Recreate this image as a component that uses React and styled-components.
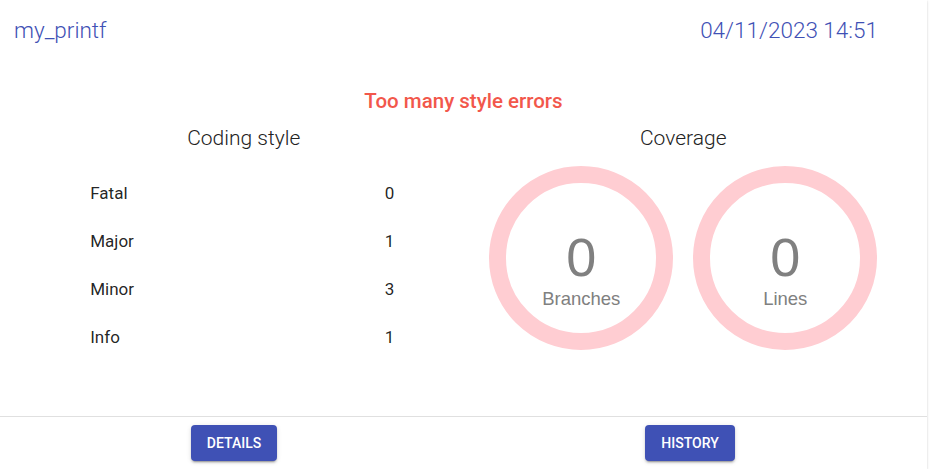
import React from 'react'
import styled, { createGlobalStyle } from 'styled-components'

const GlobalStyle = createGlobalStyle`
  body {
    margin: 0;
    background: #fff;
    font-family: Roboto, 'Noto Sans', sans-serif;
  }
`

const styleRows = [
  { label: 'Fatal', value: 0 },
  { label: 'Major', value: 1 },
  { label: 'Minor', value: 3 },
  { label: 'Info', value: 1 },
]

const coverage = [
  { label: 'Branches', value: 0 },
  { label: 'Lines', value: 0 },
]

const Ring = ({ value, label }) => (
  <RingBox>
    <svg width='184' height='184' viewBox='0 0 184 184'>
      <circle cx='92' cy='92' r='83.5' fill='none' stroke='#ffcdd2' strokeWidth='17' />
    </svg>
    <RingText>
      <span className='num'>{value}</span>
      <span className='lbl'>{label}</span>
    </RingText>
  </RingBox>
)

const App = () => {
  return (
    <>
      <GlobalStyle />
      <Card>
        <Header>
          <Title>my_printf</Title>
          <Stamp>04/11/2023 14:51</Stamp>
        </Header>
        <Content>
          <ErrorText>Too many style errors</ErrorText>
          <Columns>
            <Column>
              <Heading>Coding style</Heading>
              <Table>
                <tbody>
                  {styleRows.map((r) => (
                    <tr key={r.label}>
                      <td>{r.label}</td>
                      <td className='val'>{r.value}</td>
                    </tr>
                  ))}
                </tbody>
              </Table>
            </Column>
            <Column>
              <Heading>Coverage</Heading>
              <Rings>
                {coverage.map((c) => (
                  <Ring key={c.label} value={c.value} label={c.label} />
                ))}
              </Rings>
            </Column>
          </Columns>
        </Content>
        <Footer>
          <FooterCell>
            <Button>Details</Button>
          </FooterCell>
          <FooterCell>
            <Button>History</Button>
          </FooterCell>
        </Footer>
      </Card>
    </>
  )
}

const Card = styled.div`
  width: 927px;
  height: 469px;
  background: #fff;
  display: flex;
  flex-direction: column;
  box-shadow: 0 2px 1px -1px rgba(0, 0, 0, 0.2), 0 1px 1px 0 rgba(0, 0, 0, 0.14),
    0 1px 3px 0 rgba(0, 0, 0, 0.12);
`
const Header = styled.div`
  display: flex;
  justify-content: space-between;
  align-items: center;
  padding: 16px 49px 16px 14px;
  line-height: 29px;
  color: #3f51b5;
  font-size: 22.5px;
  font-weight: 300;
`
const Title = styled.div``
const Stamp = styled.div``
const Content = styled.div`
  flex: 1;
  padding: 27px 24px 0;
`
const ErrorText = styled.div`
  text-align: center;
  color: #f2574b;
  font-size: 20.5px;
  font-weight: 500;
  line-height: 27px;
`
const Columns = styled.div`
  display: grid;
  grid-template-columns: 1fr 1fr;
  margin-top: 7px;
`
const Column = styled.div`
  display: flex;
  flex-direction: column;
  align-items: center;
`
const Heading = styled.div`
  font-size: 21px;
  font-weight: 300;
  line-height: 32px;
  color: #222;
`
const Table = styled.table`
  width: 336px;
  border-collapse: collapse;
  margin: 15px 3px 0 0;
  td {
    height: 48px;
    padding: 0 16px;
    font-size: 17px;
    color: rgba(0, 0, 0, 0.87);
  }
  .val {
    text-align: right;
  }
`
const Rings = styled.div`
  display: flex;
  gap: 20px;
  margin-top: 12px;
`
const RingBox = styled.div`
  position: relative;
  width: 184px;
  height: 184px;
  svg {
    display: block;
  }
`
const RingText = styled.div`
  position: absolute;
  inset: 0;
  display: flex;
  flex-direction: column;
  align-items: center;
  justify-content: center;
  padding-top: 23px;
  font-family: 'Liberation Sans', Arial, sans-serif;
  color: #808080;
  .num {
    font-size: 54px;
    line-height: 56px;
  }
  .lbl {
    font-size: 18.5px;
    line-height: 22px;
    margin-top: 3px;
  }
`
const Footer = styled.div`
  display: grid;
  grid-template-columns: 1fr 1fr;
  border-top: 1px solid #e0e0e0;
  padding: 8px 9px 8px 6px;
`
const FooterCell = styled.div`
  display: flex;
  justify-content: center;
`
const Button = styled.button`
  height: 36px;
  padding: 0 16px;
  border: none;
  border-radius: 4px;
  background: #3f51b5;
  color: #fff;
  font-family: Roboto, sans-serif;
  font-size: 14px;
  font-weight: 500;
  letter-spacing: 0;
  text-transform: uppercase;
  box-shadow: 0 3px 1px -2px rgba(0, 0, 0, 0.2), 0 2px 2px 0 rgba(0, 0, 0, 0.14),
    0 1px 5px 0 rgba(0, 0, 0, 0.12);
  cursor: pointer;
`

export default App
